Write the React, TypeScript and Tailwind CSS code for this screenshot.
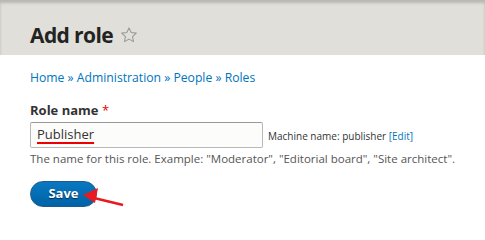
import React from 'react';

function Star() {
  return (
    <svg width="18" height="18" viewBox="0 0 24 24" className="ml-[7px] mb-[1px]">
      <path
        d="M12 2.5l2.9 6.2 6.8.8-5 4.6 1.3 6.7L12 17.5l-6 3.3 1.3-6.7-5-4.6 6.8-.8z"
        fill="none"
        stroke="#9a9a94"
        strokeWidth="1.4"
        strokeLinejoin="round"
      />
    </svg>
  );
}

function Arrow() {
  return (
    <svg className="absolute left-0 top-0 pointer-events-none" width="485" height="217">
      <line x1="123" y1="205" x2="92" y2="197.5" stroke="#e8191f" strokeWidth="2.5" />
      <polygon points="83,195 98,188 95,203" fill="#e8191f" />
    </svg>
  );
}

export default function App() {
  return (
    <div className="relative w-[485px] h-[217px] overflow-hidden bg-white font-['Open_Sans',sans-serif] text-[#333]">
      <div className="h-[55px] bg-[#e0dfd9] shadow-[inset_0_3px_3px_rgba(0,0,0,0.18)] px-[30px] flex items-end pb-[5px]">
        <h1 className="flex items-center text-[21px] leading-[30px] font-bold text-[#232323] tracking-[-0.6px]">
          Add role
          <Star />
        </h1>
      </div>

      <div className="px-[30px]">
        <nav className="mt-[14px] text-[12.2px] leading-[18px] text-[#0074bd]">
          Home » Administration » People » Roles
        </nav>

        <label className="block mt-[14px] text-[13px] leading-[18px] font-bold text-[#333]">
          Role name <span className="text-[#e00] font-normal">*</span>
        </label>

        <div className="mt-[3px] flex items-center gap-[5px]">
          <div className="w-[233px] h-[26px] border border-[#b8b8b8] border-t-[#999] rounded-[2px] bg-[#fcfcfa] px-[6px] flex items-center">
            <span className="text-[13px] text-[#333] underline decoration-[#e00] decoration-[1.5px] underline-offset-[3px]">
              Publisher
            </span>
          </div>
          <span className="text-[10px] text-[#333] mt-[3px]">
            Machine name: publisher <span className="text-[#0074bd]">[Edit]</span>
          </span>
        </div>

        <p className="mt-[3px] text-[11.5px] leading-[16px] text-[#555]">
          The name for this role. Example: "Moderator", "Editorial board", "Site architect".
        </p>

        <button className="mt-[14px] w-[67px] h-[26px] rounded-full bg-gradient-to-b from-[#0a78c0] to-[#0063a8] border border-[#1e5c90] text-white text-[13px] font-bold [text-shadow:0_1px_1px_rgba(0,0,0,0.6)]">
          Save
        </button>
      </div>
      <Arrow />
    </div>
  );
}
